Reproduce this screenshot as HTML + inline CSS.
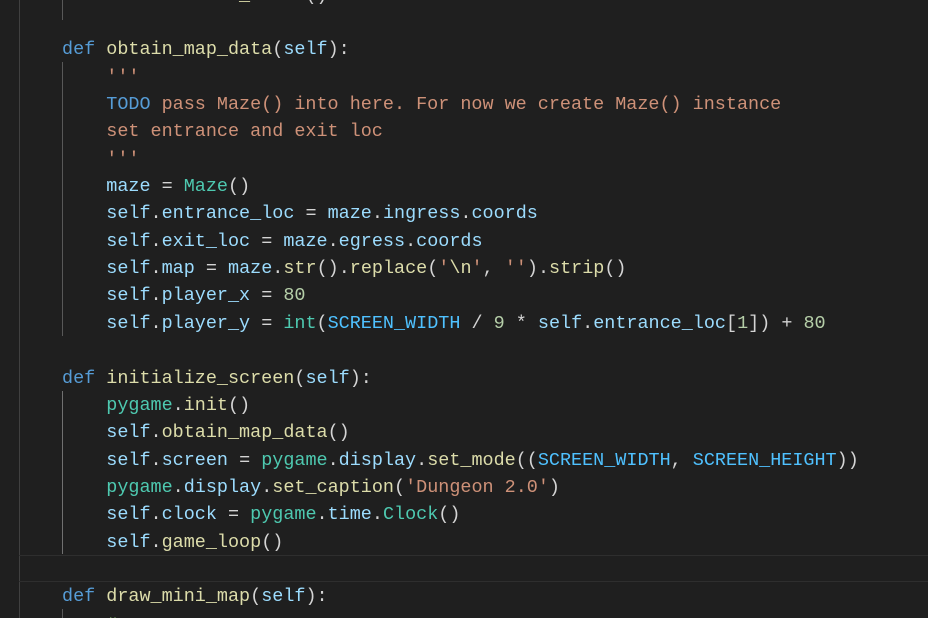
<!DOCTYPE html>
<html><head><style>
html,body{margin:0;padding:0;background:#1f1f1f;width:928px;height:618px;overflow:hidden;position:relative}
.l{position:absolute;left:62px;height:27px;line-height:27px;font-family:"Liberation Mono",monospace;font-size:18.45px;color:#d4d4d4;white-space:pre}
.k{color:#569cd6}.f{color:#dcdcaa}.v{color:#9cdcfe}.s{color:#ce9178}.n{color:#b5cea8}.c{color:#4ec9b0}.C{color:#4fc1ff}.g{color:#6a9955}
.g1{position:absolute;left:19px;top:0;width:1px;height:618px;background:#404040}
.g2{position:absolute;left:62px;width:1px;background:#585858}
.hl{position:absolute;left:19px;right:0;top:555px;height:25px;border-top:1px solid #2e2e2e;border-bottom:1px solid #2e2e2e}
</style></head><body>
<div class="g1"></div>
<div class="g2" style="top:0;height:20px"></div>
<div class="g2" style="top:62px;height:274px"></div>
<div class="g2" style="top:391px;height:163px;background:#707070"></div>
<div class="g2" style="top:609px;height:9px"></div>
<div class="hl"></div>
<div class="l" style="top:-18px">                <span class="f">_</span>     ()</div>
<div class="l" style="top:36px"><span class="k">def</span> <span class="f">obtain_map_data</span>(<span class="v">self</span>):</div>
<div class="l" style="top:64px"><span class="s">    '''</span></div>
<div class="l" style="top:91px">    <span class="k">TODO</span><span class="s"> pass Maze() into here. For now we create Maze() instance</span></div>
<div class="l" style="top:118px"><span class="s">    set entrance and exit loc</span></div>
<div class="l" style="top:146px"><span class="s">    '''</span></div>
<div class="l" style="top:173px">    <span class="v">maze</span> = <span class="c">Maze</span>()</div>
<div class="l" style="top:200px">    <span class="v">self</span>.<span class="v">entrance_loc</span> = <span class="v">maze</span>.<span class="v">ingress</span>.<span class="v">coords</span></div>
<div class="l" style="top:228px">    <span class="v">self</span>.<span class="v">exit_loc</span> = <span class="v">maze</span>.<span class="v">egress</span>.<span class="v">coords</span></div>
<div class="l" style="top:255px">    <span class="v">self</span>.<span class="v">map</span> = <span class="v">maze</span>.<span class="f">str</span>().<span class="f">replace</span>(<span class="s">'</span><span class="f">\n</span><span class="s">'</span>, <span class="s">''</span>).<span class="f">strip</span>()</div>
<div class="l" style="top:282px">    <span class="v">self</span>.<span class="v">player_x</span> = <span class="n">80</span></div>
<div class="l" style="top:310px">    <span class="v">self</span>.<span class="v">player_y</span> = <span class="c">int</span>(<span class="C">SCREEN_WIDTH</span> / <span class="n">9</span> * <span class="v">self</span>.<span class="v">entrance_loc</span>[<span class="n">1</span>]) + <span class="n">80</span></div>
<div class="l" style="top:365px"><span class="k">def</span> <span class="f">initialize_screen</span>(<span class="v">self</span>):</div>
<div class="l" style="top:392px">    <span class="c">pygame</span>.<span class="f">init</span>()</div>
<div class="l" style="top:419px">    <span class="v">self</span>.<span class="f">obtain_map_data</span>()</div>
<div class="l" style="top:447px">    <span class="v">self</span>.<span class="v">screen</span> = <span class="c">pygame</span>.<span class="v">display</span>.<span class="f">set_mode</span>((<span class="C">SCREEN_WIDTH</span>, <span class="C">SCREEN_HEIGHT</span>))</div>
<div class="l" style="top:474px">    <span class="c">pygame</span>.<span class="v">display</span>.<span class="f">set_caption</span>(<span class="s">'Dungeon 2.0'</span>)</div>
<div class="l" style="top:501px">    <span class="v">self</span>.<span class="v">clock</span> = <span class="c">pygame</span>.<span class="v">time</span>.<span class="c">Clock</span>()</div>
<div class="l" style="top:529px">    <span class="v">self</span>.<span class="f">game_loop</span>()</div>
<div class="l" style="top:583px"><span class="k">def</span> <span class="f">draw_mini_map</span>(<span class="v">self</span>):</div>
<div class="l" style="top:611px">    <span class="g">#</span></div>
</body></html>
